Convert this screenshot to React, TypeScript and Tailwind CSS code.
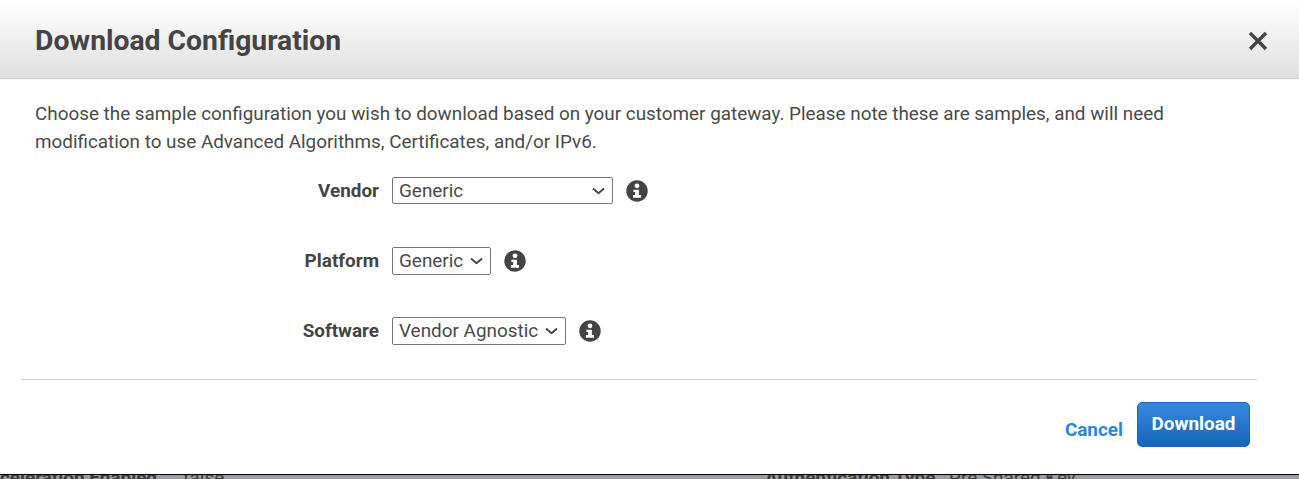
import React from "react";

function Info() {
  return (
    <svg viewBox="0 0 512 512" className="w-[22px] h-[22px] shrink-0 ml-[13px] -mt-[1px]">
      <circle cx="256" cy="256" r="250" fill="#444444" />
      <circle cx="256" cy="136" r="56" fill="#ffffff" />
      <path d="M172 226 H300 V350 H350 V414 H162 V350 H212 V282 H172 Z" fill="#ffffff" />
    </svg>
  );
}

function Row({ label, value, selectClass }: { label: string; value: string; selectClass: string }) {
  return (
    <div className="flex items-center h-[28px]">
      <label className="w-[392px] text-right font-bold text-[18.9px] text-[#444444] pr-[13px] shrink-0">{label}</label>
      <div className="relative">
        <select
          defaultValue={value}
          className={`block appearance-none border border-[#767676] bg-white text-[18.9px] leading-[24px] text-[#4a4a4a] pl-[6px] rounded-[2px] font-['Roboto',sans-serif] ${selectClass}`}
        >
          <option>{value}</option>
        </select>
        <svg viewBox="0 0 13 7" className="absolute right-[8px] top-1/2 -translate-y-1/2 w-[13px] h-[7px] pointer-events-none" fill="none" stroke="#444444" strokeWidth="1.8">
          <path d="M1 1 L6.5 5.8 L12 1" />
        </svg>
      </div>
      <Info />
    </div>
  );
}

export default function App() {
  return (
    <div className="w-[1299px] h-[479px] overflow-hidden font-['Roboto',sans-serif] text-[#4a4a4a] bg-[#9a9ea2]">
      <div className="bg-white h-[474px] flex flex-col">
        <div className="h-[79px] shrink-0 border-b border-[#cccccc] bg-gradient-to-b from-white to-[#e0e0e0] flex items-center justify-between pl-[35px] pr-[31px] pt-[3px]">
          <h1 className="font-bold text-[28.3px] leading-[32px] text-[#444444]">Download Configuration</h1>
          <svg viewBox="0 0 20 20" className="w-[20px] h-[20px] mt-[1px]" stroke="#444444" strokeWidth="3.4" fill="none">
            <path d="M2 2 L18 18 M18 2 L2 18" />
          </svg>
        </div>
        <p className="pl-[35px] pt-[21px] text-[18.88px] leading-[28px] w-[1200px]">
          Choose the sample configuration you wish to download based on your customer gateway. Please note these are samples, and will need modification to use Advanced Algorithms, Certificates, and/or IPv6.
        </p>
        <div className="flex flex-col gap-[42px] mt-[21px]">
          <Row label="Vendor" value="Generic" selectClass="w-[221px] h-[27px] -mt-[1px]" />
          <Row label="Platform" value="Generic" selectClass="w-[99px] h-[28px]" />
          <Row label="Software" value="Vendor Agnostic" selectClass="w-[174px] h-[28px]" />
        </div>
        <div className="mx-[21px] w-[1236px] mt-[34px] border-t border-[#cccccc]" />
        <div className="flex justify-end items-center pr-[49px] pt-[22px]">
          <a className="font-bold text-[18.9px] text-[#2b85e0] mr-[14px] mt-[11px]">Cancel</a>
          <button className="w-[113px] h-[45px] rounded-[5px] border border-[#1a66b8] bg-gradient-to-b from-[#3589dd] to-[#1566bb] text-white font-bold text-[18.9px]">
            Download
          </button>
        </div>
      </div>
      <div className="h-[5px] border-t border-black overflow-hidden text-[18.9px] leading-[20px] text-[#3a3a3a]">
        <div className="flex -mt-[7px] whitespace-nowrap">
          <span className="font-bold w-[157px] text-right shrink-0 [direction:rtl]">Acceleration Enabled</span>
          <span className="w-[608px] pl-[26px] shrink-0">false</span>
          <span className="font-bold w-[184px] shrink-0">Authentication Type</span>
          <span>Pre Shared Key</span>
        </div>
      </div>
    </div>
  );
}
